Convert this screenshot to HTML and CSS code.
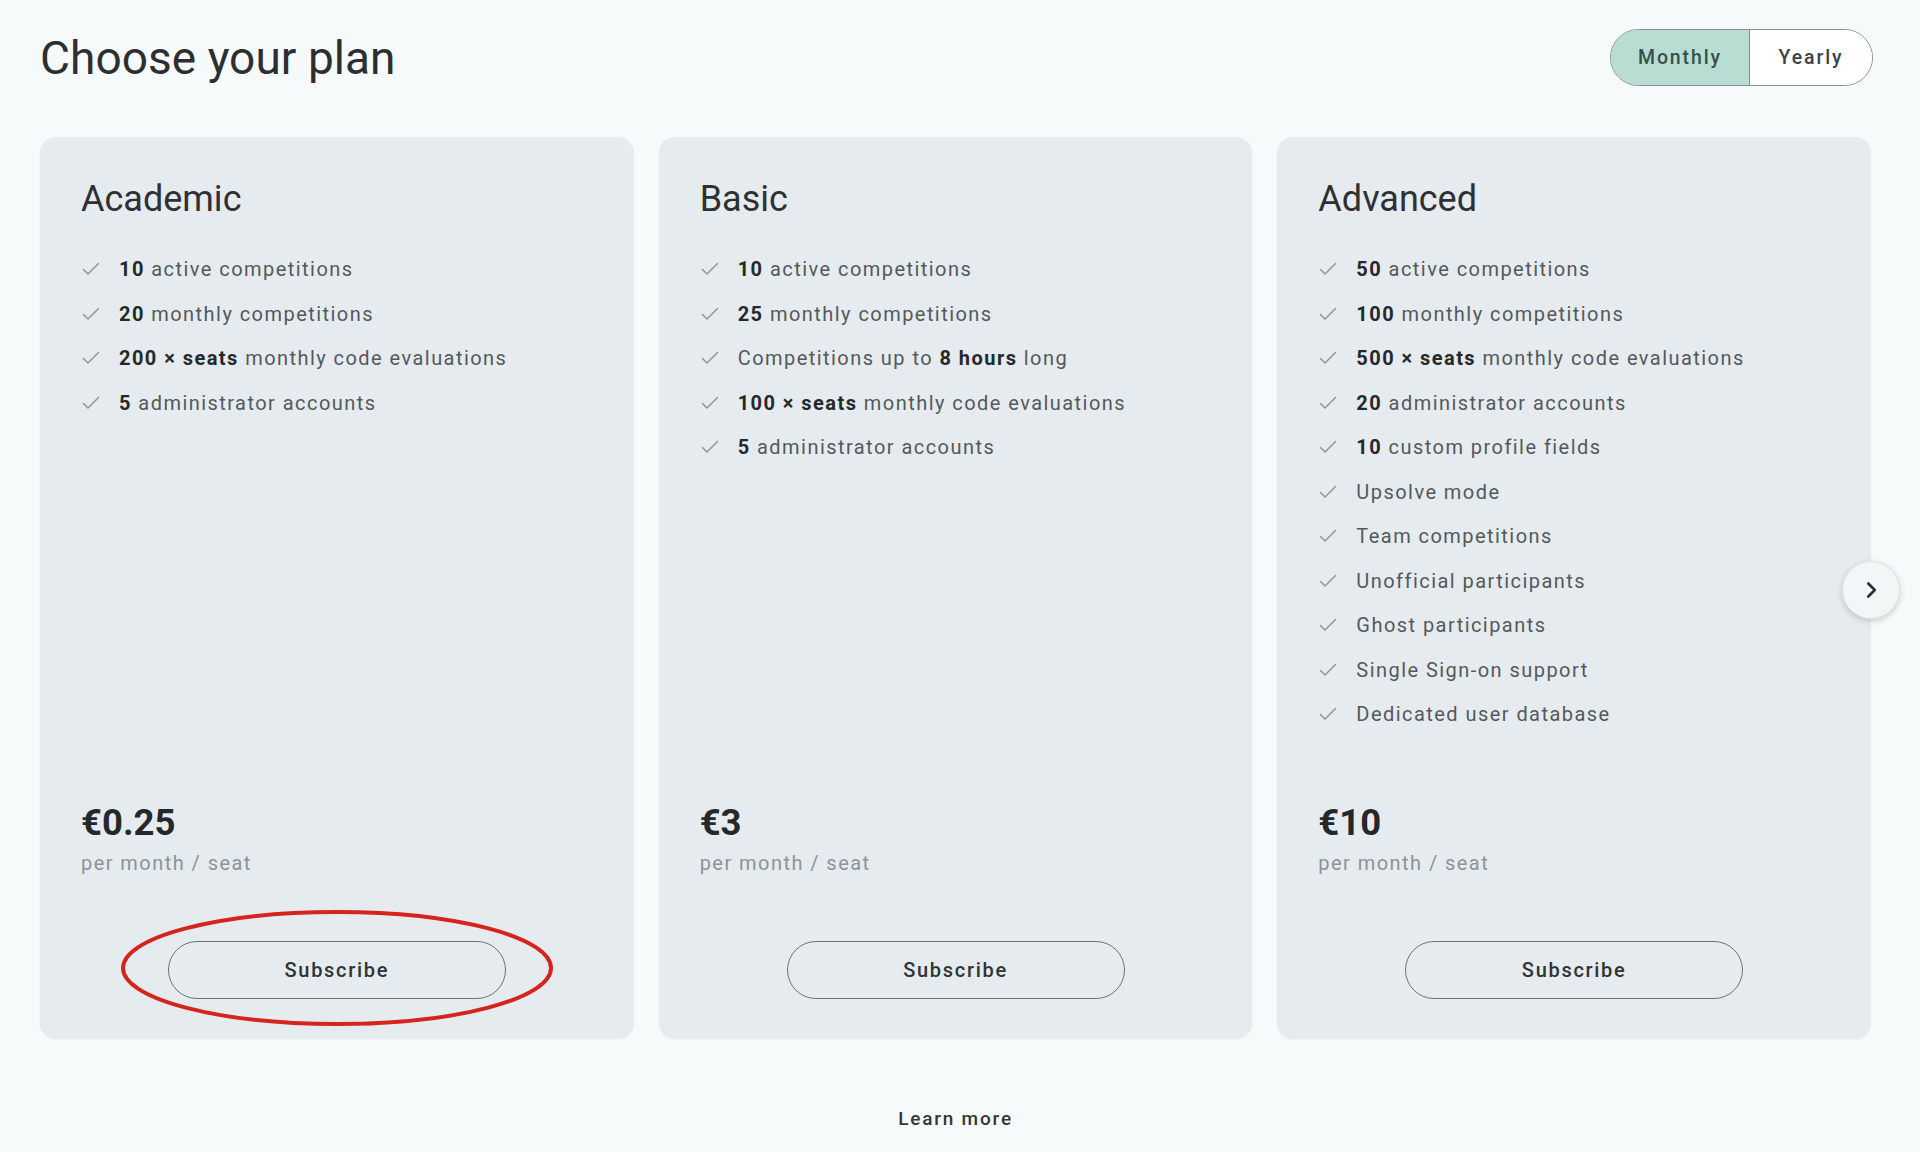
FILE: index.html
```html
<!DOCTYPE html>
<html lang="en">
<head>
<meta charset="utf-8">
<title>Choose your plan</title>
<link rel="stylesheet" href="styles.css">
</head>
<body>
<div class="page">
  <header class="top">
    <h1 class="title">Choose your plan</h1>
    <div class="toggle">
      <button class="seg seg-active">Monthly</button>
      <button class="seg">Yearly</button>
    </div>
  </header>

  <div class="carousel">
    <div class="cards">
      <section class="card">
        <h2 class="plan">Academic</h2>
        <ul class="features">
          <li><svg class="chk" viewBox="0 0 18 14"><path d="M1.5 7.5 L6 12 L16.5 1.5"/></svg><span><b>10</b> active competitions</span></li>
          <li><svg class="chk" viewBox="0 0 18 14"><path d="M1.5 7.5 L6 12 L16.5 1.5"/></svg><span><b>20</b> monthly competitions</span></li>
          <li><svg class="chk" viewBox="0 0 18 14"><path d="M1.5 7.5 L6 12 L16.5 1.5"/></svg><span><b>200 × seats</b> monthly code evaluations</span></li>
          <li><svg class="chk" viewBox="0 0 18 14"><path d="M1.5 7.5 L6 12 L16.5 1.5"/></svg><span><b>5</b> administrator accounts</span></li>
        </ul>
        <div class="foot">
          <div class="price">€0.25</div>
          <div class="per">per month / seat</div>
          <div class="btn-wrap">
            <button class="subscribe">Subscribe</button>
            <svg class="mark" viewBox="0 0 440 124"><ellipse cx="220" cy="62" rx="214" ry="56"/></svg>
          </div>
        </div>
      </section>

      <section class="card">
        <h2 class="plan">Basic</h2>
        <ul class="features">
          <li><svg class="chk" viewBox="0 0 18 14"><path d="M1.5 7.5 L6 12 L16.5 1.5"/></svg><span><b>10</b> active competitions</span></li>
          <li><svg class="chk" viewBox="0 0 18 14"><path d="M1.5 7.5 L6 12 L16.5 1.5"/></svg><span><b>25</b> monthly competitions</span></li>
          <li><svg class="chk" viewBox="0 0 18 14"><path d="M1.5 7.5 L6 12 L16.5 1.5"/></svg><span>Competitions up to <b>8 hours</b> long</span></li>
          <li><svg class="chk" viewBox="0 0 18 14"><path d="M1.5 7.5 L6 12 L16.5 1.5"/></svg><span><b>100 × seats</b> monthly code evaluations</span></li>
          <li><svg class="chk" viewBox="0 0 18 14"><path d="M1.5 7.5 L6 12 L16.5 1.5"/></svg><span><b>5</b> administrator accounts</span></li>
        </ul>
        <div class="foot">
          <div class="price">€3</div>
          <div class="per">per month / seat</div>
          <div class="btn-wrap">
            <button class="subscribe">Subscribe</button>
          </div>
        </div>
      </section>

      <section class="card">
        <h2 class="plan">Advanced</h2>
        <ul class="features">
          <li><svg class="chk" viewBox="0 0 18 14"><path d="M1.5 7.5 L6 12 L16.5 1.5"/></svg><span><b>50</b> active competitions</span></li>
          <li><svg class="chk" viewBox="0 0 18 14"><path d="M1.5 7.5 L6 12 L16.5 1.5"/></svg><span><b>100</b> monthly competitions</span></li>
          <li><svg class="chk" viewBox="0 0 18 14"><path d="M1.5 7.5 L6 12 L16.5 1.5"/></svg><span><b>500 × seats</b> monthly code evaluations</span></li>
          <li><svg class="chk" viewBox="0 0 18 14"><path d="M1.5 7.5 L6 12 L16.5 1.5"/></svg><span><b>20</b> administrator accounts</span></li>
          <li><svg class="chk" viewBox="0 0 18 14"><path d="M1.5 7.5 L6 12 L16.5 1.5"/></svg><span><b>10</b> custom profile fields</span></li>
          <li><svg class="chk" viewBox="0 0 18 14"><path d="M1.5 7.5 L6 12 L16.5 1.5"/></svg><span>Upsolve mode</span></li>
          <li><svg class="chk" viewBox="0 0 18 14"><path d="M1.5 7.5 L6 12 L16.5 1.5"/></svg><span>Team competitions</span></li>
          <li><svg class="chk" viewBox="0 0 18 14"><path d="M1.5 7.5 L6 12 L16.5 1.5"/></svg><span>Unofficial participants</span></li>
          <li><svg class="chk" viewBox="0 0 18 14"><path d="M1.5 7.5 L6 12 L16.5 1.5"/></svg><span>Ghost participants</span></li>
          <li><svg class="chk" viewBox="0 0 18 14"><path d="M1.5 7.5 L6 12 L16.5 1.5"/></svg><span>Single Sign-on support</span></li>
          <li><svg class="chk" viewBox="0 0 18 14"><path d="M1.5 7.5 L6 12 L16.5 1.5"/></svg><span>Dedicated user database</span></li>
        </ul>
        <div class="foot">
          <div class="price">€10</div>
          <div class="per">per month / seat</div>
          <div class="btn-wrap">
            <button class="subscribe">Subscribe</button>
          </div>
        </div>
      </section>
    </div>
    <button class="next" aria-label="Next"><svg viewBox="0 0 24 24"><path d="M9.5 6 L15.5 12 L9.5 18"/></svg></button>
  </div>

  <div class="learn">Learn more</div>
</div>
</body>
</html>
```

FILE: styles.css
```css
* { box-sizing: border-box; }

html, body {
  margin: 0;
  padding: 0;
  background: #f7fafa;
}

body {
  font-family: Roboto, "Liberation Sans", Arial, sans-serif;
  color: #2a2d2f;
}

.page {
  padding: 29px 49px 0 40px;
  min-height: 1152px;
}

.top {
  display: flex;
  align-items: center;
  justify-content: space-between;
  height: 57px;
}

.title {
  margin: 0;
  font-size: 46px;
  font-weight: 400;
  color: #2c2e30;
  letter-spacing: 0.05px;
}

.toggle {
  display: flex;
  height: 57px;
  border: 1.5px solid #84908f;
  border-radius: 29px;
  overflow: hidden;
  margin-right: -2px;
}

.seg {
  border: 0;
  margin: 0;
  padding: 0;
  font-family: inherit;
  font-size: 19.5px;
  font-weight: 500;
  letter-spacing: 1.9px;
  color: #3d4446;
  background: #ffffff;
  width: 122px;
}

.seg-active {
  width: 139px;
  background: #b9ddd3;
  color: #36504b;
  border-right: 1.5px solid #84908f;
}

.carousel {
  position: relative;
  margin-top: 51px;
}

.cards {
  display: flex;
  gap: 25px;
  align-items: stretch;
}

.card {
  flex: 1 1 0;
  background: #e6ebef;
  border-radius: 16px;
  padding: 40px 41px 40px 41px;
  display: flex;
  flex-direction: column;
  box-shadow: 0 1px 3px rgba(0, 0, 0, 0.03);
}

.plan {
  margin: 0;
  font-size: 36px;
  line-height: 44px;
  font-weight: 400;
  color: #2e3133;
  letter-spacing: 0;
}

.features {
  list-style: none;
  margin: 26px 0 0;
  padding: 0;
}

.features li {
  display: flex;
  align-items: center;
  height: 44.5px;
  font-size: 20px;
  letter-spacing: 1.45px;
  color: #54595c;
}

.features b {
  font-weight: 700;
  color: #26292b;
}

.chk {
  width: 18px;
  height: 14px;
  margin-left: 1px;
  margin-right: 19px;
  flex: none;
}

.chk path {
  fill: none;
  stroke: #8d969a;
  stroke-width: 1.5;
  stroke-linecap: round;
  stroke-linejoin: round;
}

.foot {
  margin-top: auto;
  padding-top: 64px;
}

.price {
  font-size: 36.5px;
  line-height: 44px;
  font-weight: 700;
  color: #25282a;
}

.per {
  margin-top: 4px;
  font-size: 20px;
  line-height: 28px;
  letter-spacing: 1.45px;
  color: #8d9397;
}

.btn-wrap {
  position: relative;
  width: 338px;
  margin: 64px auto 0;
}

.subscribe {
  display: block;
  width: 338px;
  height: 58px;
  border: 1.5px solid #6c7375;
  border-radius: 29px;
  background: transparent;
  font-family: inherit;
  font-size: 20px;
  font-weight: 500;
  letter-spacing: 1.7px;
  color: #2f3436;
}

.mark {
  position: absolute;
  left: -51px;
  top: -35px;
  width: 440px;
  height: 124px;
  pointer-events: none;
  overflow: visible;
}

.mark ellipse {
  fill: none;
  stroke: #d5231d;
  stroke-width: 4;
}

.next {
  position: absolute;
  right: -29px;
  top: 424px;
  width: 58px;
  height: 58px;
  border-radius: 50%;
  border: 1px solid #dfe4e6;
  background: #f3f6f7;
  box-shadow: 0 2px 6px rgba(0, 0, 0, 0.18);
  padding: 0;
  display: flex;
  align-items: center;
  justify-content: center;
}

.next svg {
  width: 26px;
  height: 26px;
}

.next path {
  fill: none;
  stroke: #2a2e30;
  stroke-width: 2.4;
  stroke-linecap: round;
  stroke-linejoin: round;
}

.learn {
  margin-top: 68px;
  text-align: center;
  font-size: 19px;
  line-height: 24px;
  font-weight: 500;
  letter-spacing: 1.8px;
  color: #333739;
  padding-left: 0;
}
```
